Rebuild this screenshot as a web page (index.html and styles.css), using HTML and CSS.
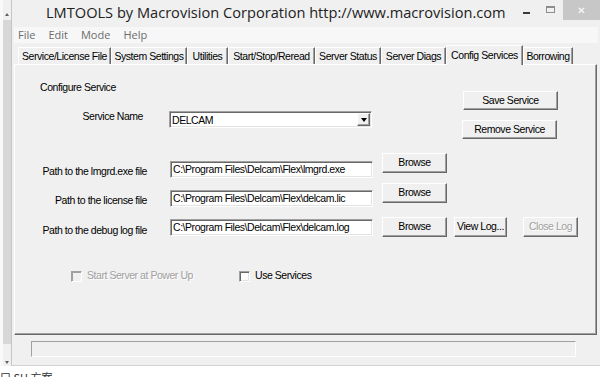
FILE: index.html
```html
<!DOCTYPE html>
<html>
<head>
<meta charset="utf-8">
<link rel="stylesheet" href="styles.css">
</head>
<body>
<div class="screen">
  <div class="strip">
    <div class="strip-end"><span class="arrow-up"></span></div>
    <div class="strip-track"></div>
    <div class="strip-end bottom"><span class="arrow-down"></span></div>
  </div>
  <div class="window">
    <div class="titlebar">
      <div class="title">LMTOOLS by Macrovision Corporation http://www.macrovision.com</div>
      <div class="controls">
        <span class="ctl-min"></span>
        <span class="ctl-max"></span>
        <span class="ctl-close">✕</span>
      </div>
    </div>
    <div class="client">
      <div class="menubar">
        <span class="menu-item">File</span>
        <span class="menu-item">Edit</span>
        <span class="menu-item">Mode</span>
        <span class="menu-item">Help</span>
      </div>
      <div class="tabs">
        <div class="tab t1">Service/License File</div>
        <div class="tab t2">System Settings</div>
        <div class="tab t3">Utilities</div>
        <div class="tab t4">Start/Stop/Reread</div>
        <div class="tab t5">Server Status</div>
        <div class="tab t6">Server Diags</div>
        <div class="tab t7 active">Config Services</div>
        <div class="tab t8">Borrowing</div>
      </div>
      <div class="panel">
        <div class="cfg-top">
          <div class="cfg-left">
            <div class="heading">Configure Service</div>
            <div class="svc-row">
              <div class="svc-label">Service Name</div>
              <div class="combo">
                <span class="combo-text">DELCAM</span>
                <span class="combo-btn"><span class="tri"></span></span>
              </div>
            </div>
          </div>
          <div class="cfg-right">
            <div class="btn btn-save">Save Service</div>
            <div class="btn btn-remove">Remove Service</div>
          </div>
        </div>

        <div class="prow r1">
          <div class="plabel">Path to the lmgrd.exe file</div>
          <div class="field">C:\Program Files\Delcam\Flex\lmgrd.exe</div>
          <div class="btn btn-browse">Browse</div>
        </div>
        <div class="prow r2">
          <div class="plabel">Path to the license file</div>
          <div class="field">C:\Program Files\Delcam\Flex\delcam.lic</div>
          <div class="btn btn-browse">Browse</div>
        </div>
        <div class="prow r3">
          <div class="plabel">Path to the debug log file</div>
          <div class="field">C:\Program Files\Delcam\Flex\delcam.log</div>
          <div class="btn btn-browse">Browse</div>
          <div class="btn btn-view">View Log...</div>
          <div class="btn btn-close disabled">Close Log</div>
        </div>

        <div class="checks">
          <div class="chk chk1 disabled"><span class="box"></span><span class="chk-label">Start Server at Power Up</span></div>
          <div class="chk chk2"><span class="box"></span><span class="chk-label">Use Services</span></div>
        </div>
      </div>
      <div class="status"></div>
    </div>
  </div>
</div>
<div class="below">口 SU 方案</div>
</body>
</html>
```

FILE: styles.css
```css
* { box-sizing: border-box; }

body {
  margin: 0;
  width: 600px;
  height: 377px;
  overflow: hidden;
  background: #ffffff;
  font-family: "Liberation Sans", Arial, sans-serif;
  font-size: 10.5px;
  letter-spacing: -0.45px;
  color: #000;
}

.screen {
  display: flex;
  height: 366px;
}

/* scrollbar strip of a window behind */
.strip {
  width: 11px;
  border-left: 3px solid #f9f9f9;
  display: flex;
  flex-direction: column;
}
.strip-end {
  height: 20px;
  background: #f0f0f0;
  display: flex;
  justify-content: center;
  align-items: center;
}
.strip-end.bottom { height: 22px; align-items: flex-end; padding-bottom: 2px; }
.strip-track { flex: 1; background: #d7d7d7; }
.arrow-up {
  width: 0; height: 0;
  border-left: 2.5px solid transparent;
  border-right: 2.5px solid transparent;
  border-bottom: 3px solid #606060;
  margin-top: 8px;
}
.arrow-down {
  width: 0; height: 0;
  border-left: 2.5px solid transparent;
  border-right: 2.5px solid transparent;
  border-top: 3px solid #606060;
}

.window {
  flex: 1;
  background: #f0f0f0;
  border-left: 1px solid #c6c6c6;
  border-bottom: 1px solid #d2d2d2;
  display: flex;
  flex-direction: column;
}

/* title bar */
.titlebar {
  height: 27px;
  display: flex;
  align-items: flex-start;
}
.title {
  padding-left: 34px;
  font-family: "Open Sans", "Noto Sans", sans-serif;
  font-size: 14.6px;
  letter-spacing: 0;
  line-height: 25px;
  color: #222;
  white-space: nowrap;
}
.controls {
  margin-left: auto;
  display: flex;
  align-items: flex-start;
}
.ctl-min {
  width: 7px;
  height: 2px;
  background: #3a3a3a;
  margin-top: 12px;
  margin-right: 16px;
}
.ctl-max {
  width: 9px;
  height: 7px;
  border: 1px solid #8c8c8c;
  border-top-width: 2px;
  margin-top: 6px;
  margin-right: 8px;
}
.ctl-close {
  width: 37px;
  height: 20px;
  background: #c7c7c7;
  color: #fff;
  font-family: "DejaVu Sans", sans-serif;
  font-size: 10px;
  letter-spacing: 0;
  font-weight: bold;
  display: flex;
  align-items: center;
  justify-content: center;
}

.client {
  margin-left: 2px;
  display: flex;
  flex-direction: column;
}

/* menu */
.menubar {
  height: 16px;
  background: #f7f7f7;
  display: flex;
  gap: 13px;
  padding-left: 4px;
  font-family: "Open Sans", "Noto Sans", sans-serif;
  font-size: 11px;
  letter-spacing: 0;
  line-height: 16px;
  color: #6c6c6c;
  margin-right: 2px;
}

/* tabs */
.tabs {
  height: 21px;
  display: flex;
  align-items: flex-end;
  padding-left: 4px;
}
.tab {
  height: 17px;
  border-top: 1px solid #ffffff;
  border-left: 1px solid #ffffff;
  border-right: 1px solid #696969;
  box-shadow: inset -1px 0 0 #a0a0a0;
  text-align: center;
  line-height: 13px;
  padding-top: 2px;
  white-space: nowrap;
}
.tab.active {
  height: 20px;
  margin-bottom: -1px;
  padding-top: 3px;
  background: #f0f0f0;
  position: relative;
  z-index: 1;
}
.t1 { width: 93px; }
.t2 { width: 76px; }
.t3 { width: 41px; }
.t4 { width: 87px; }
.t5 { width: 66px; }
.t6 { width: 65px; }
.t7 { width: 77px; }
.t8 { width: 50px; }

/* panel */
.panel {
  width: 583px;
  height: 271px;
  border-top: 1px solid #ffffff;
  border-left: 1px solid #ffffff;
  border-right: 1px solid #696969;
  border-bottom: 1px solid #696969;
  box-shadow: inset -1px -1px 0 #a0a0a0;
  display: flex;
  flex-direction: column;
  line-height: 13px;
}

.cfg-top {
  display: flex;
  margin-top: 16px;
}
.cfg-left { width: 357px; }
.heading { margin-left: 25px; }
.svc-row {
  display: flex;
  align-items: flex-start;
  margin-top: 16px;
}
.svc-label {
  width: 128px;
  text-align: right;
}
.combo {
  margin-left: 26px;
  margin-top: 1px;
  width: 203px;
  height: 17px;
  background: #fff;
  border-top: 1px solid #a0a0a0;
  border-left: 1px solid #a0a0a0;
  border-right: 1px solid #ffffff;
  border-bottom: 1px solid #ffffff;
  box-shadow: inset 1px 1px 0 #696969, inset -1px -1px 0 #e3e3e3;
  display: flex;
  align-items: flex-start;
  padding: 1px 1px 1px 2px;
}
.combo-text { padding-top: 1px; }
.combo-btn {
  margin-left: auto;
  width: 13px;
  height: 13px;
  background: #f0f0f0;
  border-top: 1px solid #ffffff;
  border-left: 1px solid #ffffff;
  border-right: 1px solid #696969;
  border-bottom: 1px solid #696969;
  box-shadow: inset -1px -1px 0 #a0a0a0;
  display: flex;
  align-items: center;
  justify-content: center;
}
.tri {
  width: 0; height: 0;
  border-left: 3.5px solid transparent;
  border-right: 3.5px solid transparent;
  border-top: 4px solid #000;
}

.cfg-right {
  margin-left: 90px;
  display: flex;
  flex-direction: column;
  align-items: flex-start;
}

.btn {
  height: 20px;
  background: #f0f0f0;
  border-top: 1px solid #ffffff;
  border-left: 1px solid #ffffff;
  border-right: 1px solid #696969;
  border-bottom: 1px solid #696969;
  box-shadow: inset -1px -1px 0 #a0a0a0;
  display: flex;
  align-items: center;
  justify-content: center;
  white-space: nowrap;
  padding-bottom: 1px;
}
.btn.disabled {
  color: #a0a0a0;
  text-shadow: 1px 1px 0 #ffffff;
}
.btn-save { width: 95px; height: 19px; margin-top: 10px; margin-left: 1px; }
.btn-remove { width: 95px; height: 19px; margin-top: 10px; }
.btn-browse { width: 65px; margin-left: 9px; }
.btn-view { width: 53px; margin-left: 7px; }
.btn-close { width: 55px; margin-left: 16px; }

.prow {
  display: flex;
  align-items: flex-start;
}
.plabel {
  width: 132px;
  text-align: right;
  white-space: nowrap;
}
.field {
  margin-left: 23px;
  width: 203px;
  height: 17px;
  background: #fff;
  border-top: 1px solid #a0a0a0;
  border-left: 1px solid #a0a0a0;
  border-right: 1px solid #ffffff;
  border-bottom: 1px solid #ffffff;
  box-shadow: inset 1px 1px 0 #696969, inset -1px -1px 0 #e3e3e3;
  padding: 1px 0 0 2px;
  white-space: nowrap;
  overflow: hidden;
}
.r1 { margin-top: 14px; }
.r1 .plabel { margin-top: 12px; }
.r1 .field { margin-top: 8px; }
.r2 { margin-top: 5px; }
.r2 .plabel { margin-top: 11px; }
.r2 .field { margin-top: 7px; }
.r3 { margin-top: 10px; }
.r3 .plabel { margin-top: 7px; }
.r3 .field { margin-top: 2px; }

.checks {
  display: flex;
  margin-top: 32px;
}
.chk {
  display: flex;
  align-items: flex-start;
}
.chk1 { margin-left: 56px; width: 168px; }
.box {
  width: 11px;
  height: 11px;
  margin-top: 2px;
  background: #fff;
  border-top: 1px solid #a0a0a0;
  border-left: 1px solid #a0a0a0;
  border-right: 1px solid #ffffff;
  border-bottom: 1px solid #ffffff;
  box-shadow: inset 1px 1px 0 #696969, inset -1px -1px 0 #e3e3e3;
}
.chk.disabled .box {
  background: #f0f0f0;
  box-shadow: inset 1px 1px 0 #a0a0a0;
}
.chk-label { margin-left: 5px; white-space: nowrap; }
.chk.disabled .chk-label {
  color: #a0a0a0;
  text-shadow: 1px 1px 0 #ffffff;
}

.status {
  margin-top: 6px;
  margin-left: 17px;
  width: 545px;
  height: 16px;
  border-top: 1px solid #a0a0a0;
  border-left: 1px solid #a0a0a0;
  border-right: 1px solid #ffffff;
  border-bottom: 1px solid #ffffff;
}

.below {
  height: 11px;
  overflow: hidden;
  padding-top: 4px;
  font-family: "Noto Sans CJK SC", sans-serif;
  font-size: 11px;
  letter-spacing: 0;
  line-height: 14px;
  color: #333;
  white-space: nowrap;
}
```
